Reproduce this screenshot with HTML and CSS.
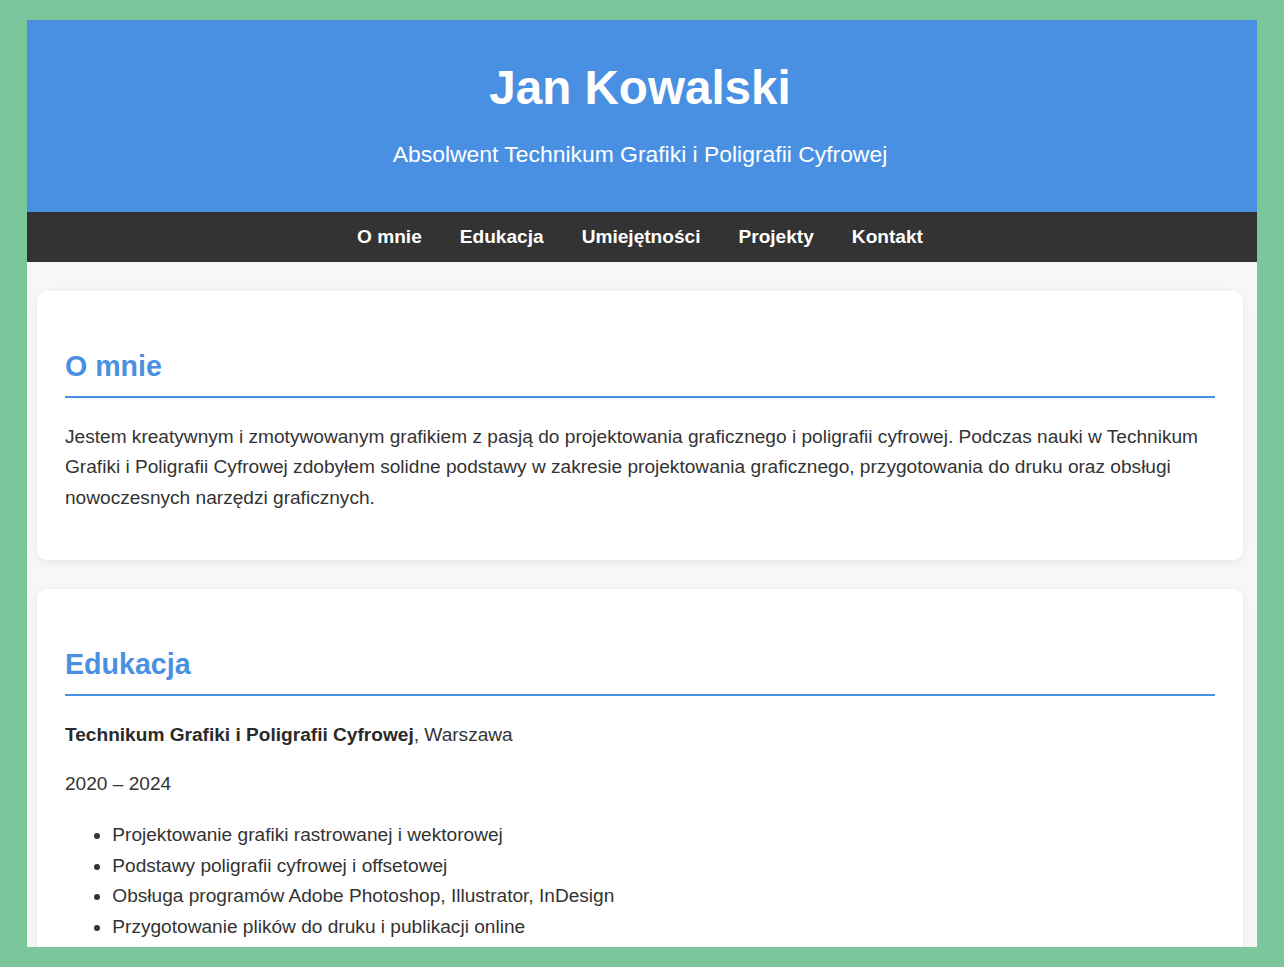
FILE: index.html
```html
<!DOCTYPE html>
<html lang="pl">
<head>
<meta charset="utf-8">
<title>Jan Kowalski – CV</title>
<link rel="stylesheet" href="styles.css">
</head>
<body>
<div class="page">
  <header class="hero">
    <h1 class="hero-title">Jan Kowalski</h1>
    <p class="hero-subtitle">Absolwent Technikum Grafiki i Poligrafii Cyfrowej</p>
  </header>
  <nav class="nav">
    <a class="nav-link" href="#o-mnie">O mnie</a>
    <a class="nav-link" href="#edukacja">Edukacja</a>
    <a class="nav-link" href="#umiejetnosci">Umiejętności</a>
    <a class="nav-link" href="#projekty">Projekty</a>
    <a class="nav-link" href="#kontakt">Kontakt</a>
  </nav>
  <main class="content">
    <section class="card" id="o-mnie">
      <h2 class="card-title">O mnie</h2>
      <p class="text">Jestem kreatywnym i zmotywowanym grafikiem z pasją do projektowania graficznego i poligrafii cyfrowej. Podczas nauki w Technikum Grafiki i Poligrafii Cyfrowej zdobyłem solidne podstawy w zakresie projektowania graficznego, przygotowania do druku oraz obsługi nowoczesnych narzędzi graficznych.</p>
    </section>
    <section class="card" id="edukacja">
      <h2 class="card-title">Edukacja</h2>
      <p class="text"><strong>Technikum Grafiki i Poligrafii Cyfrowej</strong>, Warszawa</p>
      <p class="text">2020 – 2024</p>
      <ul class="list">
        <li>Projektowanie grafiki rastrowanej i wektorowej</li>
        <li>Podstawy poligrafii cyfrowej i offsetowej</li>
        <li>Obsługa programów Adobe Photoshop, Illustrator, InDesign</li>
        <li>Przygotowanie plików do druku i publikacji online</li>
      </ul>
    </section>
  </main>
</div>
</body>
</html>
```
FILE: styles.css
```css
html, body {
  margin: 0;
  padding: 0;
}

body {
  background: #7bc69a;
  padding: 20px 27px;
  height: 927px;
  overflow: hidden;
  font-family: "Liberation Sans", Arial, sans-serif;
  color: #333;
}

.page {
  height: 927px;
  overflow: hidden;
  background: #f7f7f7;
}

.hero {
  background: #4a90e2;
  color: #fff;
  text-align: center;
  padding: 40px 4px 43px 0;
}

.hero-title {
  margin: 0;
  font-size: 47.6px;
  line-height: 56px;
  font-weight: bold;
}

.hero-subtitle {
  margin: 23px 0 0;
  font-size: 22.9px;
  line-height: 30px;
}

.nav {
  background: #333;
  height: 50px;
  display: flex;
  justify-content: center;
  align-items: center;
  gap: 38px;
  padding-right: 4px;
}

.nav-link {
  color: #fff;
  text-decoration: none;
  font-weight: bold;
  font-size: 19.1px;
  line-height: 24px;
}

.content {
  display: flex;
  flex-direction: column;
  padding: 29px 14px 0 10px;
  gap: 29px;
}

.card {
  background: #fff;
  border-radius: 10px;
  box-shadow: 0 2px 10px rgba(0, 0, 0, 0.07);
  padding: 0 28px 27.2px;
}

.card-title {
  margin: 58px 0 0;
  font-size: 28.6px;
  line-height: 34px;
  font-weight: bold;
  color: #4a90e2;
  padding-bottom: 13px;
  border-bottom: 2px solid #4a90e2;
}

.text {
  margin: 19.1px 0;
  font-size: 19.1px;
  line-height: 30.7px;
}

.card-title + .text {
  margin-top: 23.6px;
}

.text strong {
  color: #2a2a2a;
}

.list {
  margin: 20px 0 19.1px;
  padding-left: 47.3px;
  font-size: 19.1px;
  line-height: 30.7px;
}
```
